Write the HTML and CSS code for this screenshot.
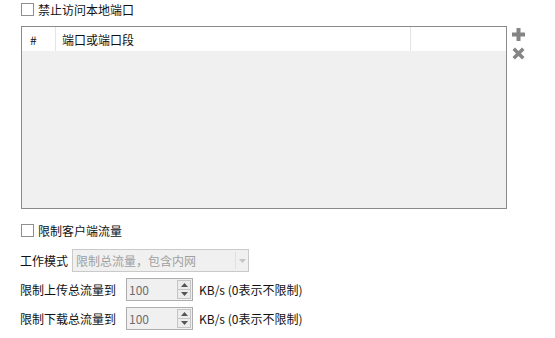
FILE: index.html
```html
<!DOCTYPE html>
<html lang="zh-CN">
<head>
    <meta charset="UTF-8">
    <title>端口设置</title>
    <link rel="stylesheet" href="styles.css">
</head>
<body>
    <div class="panel">
        <label class="check-row first">
            <span class="check-box"></span>
            <span>禁止访问本地端口</span>
        </label>

        <div class="port-area">
            <div class="port-table">
                <div class="table-head">
                    <div class="col-num">#</div>
                    <div class="col-port">端口或端口段</div>
                    <div class="col-rest"></div>
                </div>
            </div>
            <div class="tools">
                <svg class="tool" width="13" height="13" viewBox="0 0 13 13">
                    <path d="M4.5 0h4v4.5H13v4H8.5V13h-4V8.5H0v-4h4.5z" fill="#858585"/>
                </svg>
                <svg class="tool" width="13" height="13" viewBox="0 0 13 13">
                    <path d="M0.5 3L3 0.5L6.5 4L10 0.5L12.5 3L9 6.5L12.5 10L10 12.5L6.5 9L3 12.5L0.5 10L4 6.5z" fill="#858585"/>
                </svg>
            </div>
        </div>

        <label class="check-row second">
            <span class="check-box"></span>
            <span>限制客户端流量</span>
        </label>

        <div class="form-row mode-row">
            <span class="label">工作模式</span>
            <div class="select disabled">
                <span class="select-text">限制总流量，包含内网</span>
                <span class="select-arrow">
                    <svg width="7" height="4" viewBox="0 0 7 4"><path d="M0 0h7L3.5 4z" fill="#c4c4c4"/></svg>
                </span>
            </div>
        </div>

        <div class="form-row speed-row">
            <span class="label">限制上传总流量到</span>
            <div class="spin">
                <span class="spin-value">100</span>
                <span class="spin-btns">
                    <span class="spin-btn"><svg width="7" height="4" viewBox="0 0 7 4"><path d="M0 4h7L3.5 0z" fill="#555"/></svg></span>
                    <span class="spin-btn"><svg width="7" height="4" viewBox="0 0 7 4"><path d="M0 0h7L3.5 4z" fill="#555"/></svg></span>
                </span>
            </div>
            <span class="unit">KB/s (0表示不限制)</span>
        </div>

        <div class="form-row speed-row">
            <span class="label">限制下载总流量到</span>
            <div class="spin">
                <span class="spin-value">100</span>
                <span class="spin-btns">
                    <span class="spin-btn"><svg width="7" height="4" viewBox="0 0 7 4"><path d="M0 4h7L3.5 0z" fill="#555"/></svg></span>
                    <span class="spin-btn"><svg width="7" height="4" viewBox="0 0 7 4"><path d="M0 0h7L3.5 4z" fill="#555"/></svg></span>
                </span>
            </div>
            <span class="unit">KB/s (0表示不限制)</span>
        </div>
    </div>
</body>
</html>
```

FILE: styles.css
```css
body {
    margin: 0;
    background: #fff;
    font-family: "Noto Sans CJK SC", "Noto Sans", sans-serif;
    font-size: 12px;
    color: #111;
}
.panel {
    padding: 2px 0 0 20px;
}
.check-row {
    display: flex;
    align-items: center;
    gap: 4px;
    height: 14px;
    margin-left: 1px;
}
.check-box {
    width: 11px;
    height: 11px;
    border: 1px solid #8f8f8f;
    background: #fff;
}
.port-area {
    display: flex;
    align-items: flex-start;
    margin-top: 10px;
    margin-left: 1px;
}
.port-table {
    width: 484px;
    height: 181px;
    border: 1px solid #8a8a8a;
    background: #f0f0f0;
}
.table-head {
    display: flex;
    height: 24px;
    background: #fff;
}
.table-head > div {
    display: flex;
    align-items: center;
    border-right: 1px solid #e5e5e5;
    box-sizing: border-box;
}
.col-num {
    width: 34px;
    padding-left: 8px;
}
.col-port {
    width: 355px;
    padding-left: 6px;
}
.col-rest {
    flex: 1;
    border-right: none !important;
}
.tools {
    display: flex;
    flex-direction: column;
    gap: 6px;
    margin-left: 5px;
    margin-top: 2px;
}
.check-row.second {
    margin-top: 14px;
}
.form-row {
    display: flex;
    align-items: center;
}
.mode-row {
    margin-top: 12px;
}
.label {
    margin-right: 4px;
}
.speed-row .label {
    margin-right: 8px;
}
.select {
    display: flex;
    width: 175px;
    height: 21px;
    border: 1px solid #c9c9c9;
    background: #f0f0f0;
}
.select-text {
    flex: 1;
    display: flex;
    align-items: center;
    padding-left: 3px;
    color: #a0a0a0;
}
.select-arrow {
    width: 12px;
    border-left: 1px solid #e0e0e0;
    display: flex;
    align-items: center;
    justify-content: center;
    margin: 2px 0;
}
.speed-row {
    margin-top: 6px;
}
.spin {
    display: flex;
    width: 65px;
    height: 21px;
    border: 1px solid #adadad;
    background: #f0f0f0;
    margin-left: 2px;
}
.spin-value {
    flex: 1;
    display: flex;
    align-items: center;
    padding-left: 2px;
    color: #6d6d6d;
}
.spin-btns {
    width: 14px;
    display: flex;
    flex-direction: column;
    padding: 1px 1px 1px 0;
}
.spin-btn {
    flex: 1;
    display: flex;
    align-items: center;
    justify-content: center;
    border: 1px solid #c5c5c5;
    background: #ececec;
}
.spin-btn + .spin-btn {
    border-top: none;
}
.unit {
    margin-left: 6px;
}
```
